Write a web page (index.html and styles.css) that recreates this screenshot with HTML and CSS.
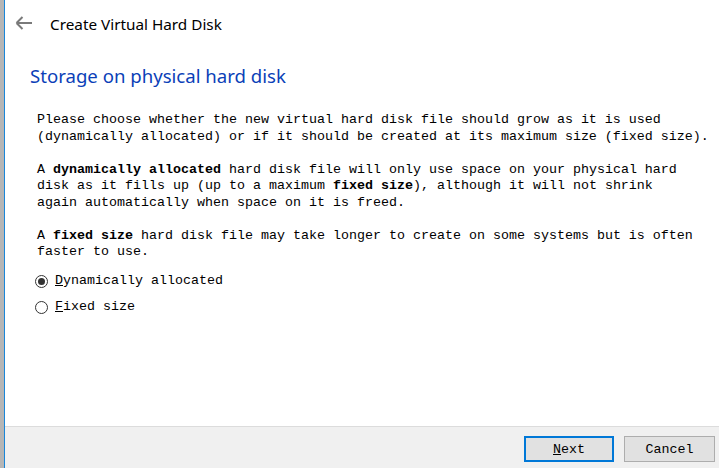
FILE: index.html
```html
<!DOCTYPE html>
<html>
<head>
<meta charset="utf-8">
<link rel="stylesheet" href="styles.css">
</head>
<body>
<div class="edge-grey"></div>
<div class="edge-blue"></div>
<div class="window">
  <div class="content">
    <div class="header">
      <svg class="back" width="18" height="14" viewBox="0 0 18 14">
        <path d="M1.5 7 H17 M1.5 7 L7.5 1 M1.5 7 L7.5 13" stroke="#7a7a7a" stroke-width="2" fill="none"/>
      </svg>
      <span class="title">Create Virtual Hard Disk</span>
    </div>
    <h1 class="heading">Storage on physical hard disk</h1>
    <div class="body">
      <p class="para">Please choose whether the new virtual hard disk file should grow as it is used<br>(dynamically allocated) or if it should be created at its maximum size (fixed size).</p>
      <p class="para">A <b>dynamically allocated</b> hard disk file will only use space on your physical hard<br>disk as it fills up (up to a maximum <b>fixed size</b>), although it will not shrink<br>again automatically when space on it is freed.</p>
      <p class="para">A <b>fixed size</b> hard disk file may take longer to create on some systems but is often<br>faster to use.</p>
      <div class="radios">
        <label class="radio"><span class="dot checked"></span><span><u>D</u>ynamically allocated</span></label>
        <label class="radio"><span class="dot"></span><span><u>F</u>ixed size</span></label>
      </div>
    </div>
  </div>
  <div class="footer">
    <button class="btn primary"><u>N</u>ext</button>
    <button class="btn">Cancel</button>
  </div>
</div>
</body>
</html>
```
FILE: styles.css
```css
html, body {
  margin: 0;
  padding: 0;
}
body {
  width: 719px;
  height: 468px;
  display: flex;
  overflow: hidden;
  background: #fff;
}
.edge-grey {
  width: 4px;
  background: #b6b6b6;
}
.edge-blue {
  width: 1px;
  background: #1a86d8;
}
.window {
  flex: 1;
  display: flex;
  flex-direction: column;
}
.content {
  flex: 1;
  background: #fff;
}
.header {
  display: flex;
  align-items: center;
  height: 28px;
  padding-top: 10px;
}
.back {
  margin-left: 10px;
  margin-top: -2px;
}
.title {
  margin-left: 17px;
  font-family: "Noto Sans", sans-serif;
  font-size: 15.3px;
  color: #000;
}
.heading {
  margin: 25px 0 0 25px;
  font-family: "Noto Sans", sans-serif;
  font-weight: normal;
  font-size: 18.6px;
  line-height: 26px;
  color: #0b3fb8;
}
.body {
  margin: 23px 0 0 32px;
  font-family: "Liberation Mono", monospace;
  font-size: 13.33px;
  line-height: 16.5px;
  color: #000;
}
.para {
  margin: 0 0 16.5px 0;
  white-space: nowrap;
}
.radios {
  display: flex;
  flex-direction: column;
  gap: 9px;
  margin-top: -4px;
}
.radio {
  display: flex;
  align-items: center;
  height: 17px;
  gap: 7px;
  margin-left: -2px;
}
.dot {
  width: 11px;
  height: 11px;
  border: 1px solid #333;
  border-radius: 50%;
  background: #fff;
  position: relative;
}
.dot.checked::after {
  content: "";
  position: absolute;
  left: 2px;
  top: 2px;
  width: 7px;
  height: 7px;
  border-radius: 50%;
  background: #333;
}
.footer {
  height: 42px;
  box-sizing: border-box;
  border-top: 1px solid #dcdcdc;
  background: #f0f0f0;
  display: flex;
  justify-content: flex-end;
  align-items: flex-start;
  gap: 10px;
  padding: 9px 4px 0 0;
}
.btn {
  width: 91px;
  height: 26px;
  box-sizing: border-box;
  border: 1px solid #adadad;
  background: #e1e1e1;
  font-family: "Liberation Mono", monospace;
  font-size: 13.33px;
  color: #000;
  padding: 0;
  margin: 0;
}
.btn.primary {
  width: 90px;
  border: 2px solid #0078d7;
}
```
